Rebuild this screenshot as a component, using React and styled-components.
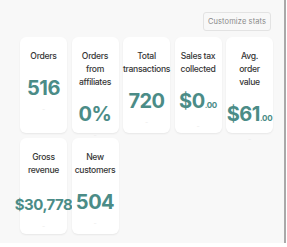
import React from "react";
import styled, { createGlobalStyle } from "styled-components";

const GlobalStyle = createGlobalStyle`
  body {
    margin: 0;
    background: #ffffff;
    font-family: Inter, "Liberation Sans", sans-serif;
  }
`;

const stats = [
  { title: "Orders", value: "516" },
  { title: "Orders from affiliates", value: "0%" },
  { title: "Total transactions", value: "720" },
  { title: "Sales tax collected", value: "$0", cents: ".00" },
  { title: "Avg. order value", value: "$61", cents: ".00" },
  { title: "Gross revenue", value: "$30,778", small: true },
  { title: "New customers", value: "504" },
];

export default function App() {
  return (
    <>
      <GlobalStyle />
      <Panel>
        <Header>
          <CustomizeButton type="button">Customize stats</CustomizeButton>
        </Header>
        <Grid>
          {stats.map((s) => (
            <Card key={s.title}>
              <Title>{s.title}</Title>
              <Value $small={s.small}>
                {s.value}
                {s.cents && <Cents>{s.cents}</Cents>}
              </Value>
              <Faint>-</Faint>
            </Card>
          ))}
        </Grid>
      </Panel>
    </>
  );
}

const Panel = styled.div`
  width: 284px;
  height: 243px;
  background: #f8f8f8;
  border-right: 2px solid #a9a9a9;
  box-sizing: content-box;
  overflow: hidden;
`;

const Header = styled.div`
  display: flex;
  justify-content: flex-end;
  padding: 12px 13px 0 0;
  height: 25px;
`;

const CustomizeButton = styled.button`
  height: 19px;
  width: 68px;
  padding: 0;
  border: 1px solid #e3e3e3;
  border-radius: 3px;
  background: #f8f8f8;
  color: #8a8a8a;
  font-family: Inter, "Liberation Sans", sans-serif;
  font-size: 7.5px;
  letter-spacing: 0.1px;
`;

const Grid = styled.div`
  display: grid;
  grid-template-columns: repeat(5, 47px);
  grid-auto-rows: 96px;
  column-gap: 4.5px;
  row-gap: 5px;
  padding-left: 20px;
`;

const Card = styled.div`
  background: #ffffff;
  border-radius: 6px;
  box-shadow: 0 1px 2px rgba(0, 0, 0, 0.07);
  display: flex;
  flex-direction: column;
  align-items: center;
  padding-top: 12.5px;
  box-sizing: border-box;
  text-align: center;
`;

const Title = styled.div`
  width: 37px;
  font-size: 8.6px;
  line-height: 13px;
  font-weight: 500;
  color: #363636;
  letter-spacing: -0.3px;
  display: flex;
  justify-content: center;
  white-space: normal;
`;

const Value = styled.div`
  margin-top: ${(p) => (p.$small ? "16px" : "13.5px")};
  font-size: ${(p) => (p.$small ? "15px" : "20px")};
  line-height: 24px;
  font-weight: 700;
  color: #4b8c87;
  letter-spacing: -0.5px;
  white-space: nowrap;
`;

const Cents = styled.span`
  font-size: 8px;
  letter-spacing: -0.3px;
`;

const Faint = styled.div`
  margin-top: 5px;
  font-size: 7px;
  color: #ececec;
`;
